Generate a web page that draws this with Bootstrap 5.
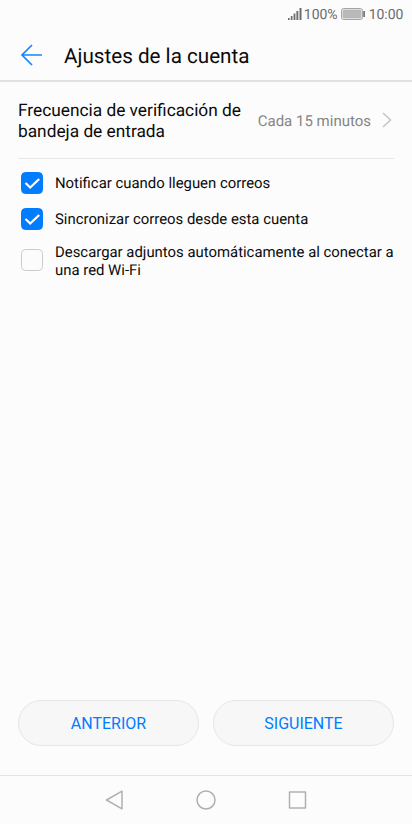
<!DOCTYPE html>
<html lang="es">
<head>
<meta charset="utf-8">
<meta name="viewport" content="width=device-width, initial-scale=1">
<title>Ajustes de la cuenta</title>
<link href="https://cdn.jsdelivr.net/npm/bootstrap@5.3.0/dist/css/bootstrap.min.css" rel="stylesheet">
<style>
body { font-family: Roboto, "Noto Sans", sans-serif; background: #fcfcfc; color: #0b0b0b; text-rendering: geometricPrecision; }
svg { display: block; flex: none; }
.screen { height: 824px; width: 412px; overflow: hidden; }
.status { height: 29px; padding-right: 8.5px; font-size: 14px; color: #6c6c6c; line-height: 27px; }
.status span { padding-top: 2px; }
.status svg { margin-bottom: 2px; }
.percent { margin: 0 3px 0 1.5px; }
.app-bar { height: 53px; padding-left: 20px; border-bottom: 2px solid #e1e1e1; }
.app-bar h1 { font-size: 20.65px; font-weight: 400; line-height: 24px; margin-left: 21px; padding-top: 4px; }
.frequency { height: 77px; margin: 0 18px; border-bottom: 1px solid #e8e8e8; padding-top: 2px; }
.frequency-label { font-size: 17.3px; line-height: 20.5px; width: 230px; padding-top: 1px; }
.frequency-value { font-size: 15px; color: #858585; gap: 11px; padding-right: 2px; }
.frequency-value svg { margin-bottom: 2px; }
.options { padding: 6px 10px 0 21px; }
.option { min-height: 37px; gap: 12px; font-size: 14.9px; line-height: 17.5px; }
.option:first-child { min-height: 36px; }
.option-two-line { padding-top: 3px; }
.option-two-line span { padding-top: 3px; }
.option .form-check-input { width: 22px; height: 22px; margin: 0; flex: none; border: 1.5px solid #ccc; border-radius: 4.5px; background-color: #fcfcfc; }
.option .form-check-input:checked { background-color: #007dff; border-color: #007dff; background-image: none; }
.option-text { padding-top: 1px; }
.box { width: 22px; height: 22px; margin-bottom: 1px; }
.box svg { pointer-events: none; }
.actions { padding: 0 18px; gap: 14px; margin-bottom: 29.5px; }
.actions .btn { height: 46px; background: #f7f7f7; border: 1px solid #e6e6e6; color: #007dff; font-size: 16px; line-height: 24px; padding: 2px 0 0; }
.soft-keys { height: 49px; border-top: 1px solid #e3e3e3; gap: 71px; }
</style>
</head>
<body>
<div class="screen d-flex flex-column">
  <div class="status d-flex align-items-center justify-content-end">
    <svg width="14" height="14" viewBox="0 0 14 14" fill="#6c6c6c"><path d="M0 11h1.600v2H0zM2.800 9h1.700v4H2.800zM5.600 6.500h1.800V13H5.600zM8.400 4h1.900v9H8.400zM11.500 1h2v12h-2z"/></svg>
    <span class="percent">100%</span>
    <svg width="24" height="12" viewBox="0 0 24 12"><rect x=".5" y=".5" width="21" height="11" rx="2" fill="#fcfcfc" stroke="#a5a5a5"/><rect x="1.500" y="1.500" width="19" height="9" rx="1" fill="#b9b9b9"/><path d="M22.200 3H24v6h-1.800z" fill="#777"/></svg>
    <span class="ms-1">10:00</span>
  </div>
  <header class="app-bar d-flex align-items-center">
    <svg width="23" height="22" viewBox="0 0 23 22" fill="none" stroke="#1586fb" stroke-width="1.700"><path d="M22 11H2M12 1 2 11l10 10"/></svg>
    <h1 class="mb-0">Ajustes de la cuenta</h1>
  </header>
  <main class="flex-grow-1">
    <div class="frequency d-flex align-items-center justify-content-between">
      <div class="frequency-label">Frecuencia de verificación de bandeja de entrada</div>
      <div class="frequency-value d-flex align-items-center text-nowrap"><span>Cada 15 minutos</span>
        <svg width="10" height="16" viewBox="0 0 10 16" fill="none" stroke="#c4c4c4" stroke-width="1.500"><path d="m1 1 7.500 7L1 15"/></svg>
      </div>
    </div>
    <div class="options">
      <label class="option d-flex align-items-center"><span class="box position-relative"><input class="form-check-input d-block" type="checkbox" checked><svg class="position-absolute top-0 start-0" width="22" height="22" fill="none" stroke="#fff" stroke-width="2.200"><path d="m4.500 11 4.700 4.500 9-8.500"/></svg></span><span class="option-text">Notificar cuando lleguen correos</span></label>
      <label class="option d-flex align-items-center"><span class="box position-relative"><input class="form-check-input d-block" type="checkbox" checked><svg class="position-absolute top-0 start-0" width="22" height="22" fill="none" stroke="#fff" stroke-width="2.200"><path d="m4.500 11 4.700 4.500 9-8.500"/></svg></span><span class="option-text">Sincronizar correos desde esta cuenta</span></label>
      <label class="option option-two-line d-flex align-items-center"><input class="form-check-input" type="checkbox"><span>Descargar adjuntos automáticamente al conectar a una red Wi-Fi</span></label>
    </div>
  </main>
  <div class="actions d-flex">
    <button class="btn rounded-pill flex-fill w-50">ANTERIOR</button>
    <button class="btn rounded-pill flex-fill w-50">SIGUIENTE</button>
  </div>
  <nav class="soft-keys d-flex align-items-center justify-content-center">
    <svg width="20" height="20" viewBox="0 0 20 20" fill="none" stroke="#b0b0b0" stroke-width="1.500" stroke-linejoin="round"><path d="M17 1.200v17.600L1.500 10z"/></svg>
    <svg width="20" height="20" viewBox="0 0 20 20" fill="none" stroke="#b0b0b0" stroke-width="1.500"><circle cx="10" cy="10" r="9"/></svg>
    <svg width="20" height="20" viewBox="0 0 20 20" fill="none" stroke="#b0b0b0" stroke-width="1.500" stroke-linejoin="round"><path d="M2.500 2h16v16h-16z"/></svg>
  </nav>
</div>
<script src="https://cdn.jsdelivr.net/npm/bootstrap@5.3.0/dist/js/bootstrap.bundle.min.js"></script>
</body>
</html>
